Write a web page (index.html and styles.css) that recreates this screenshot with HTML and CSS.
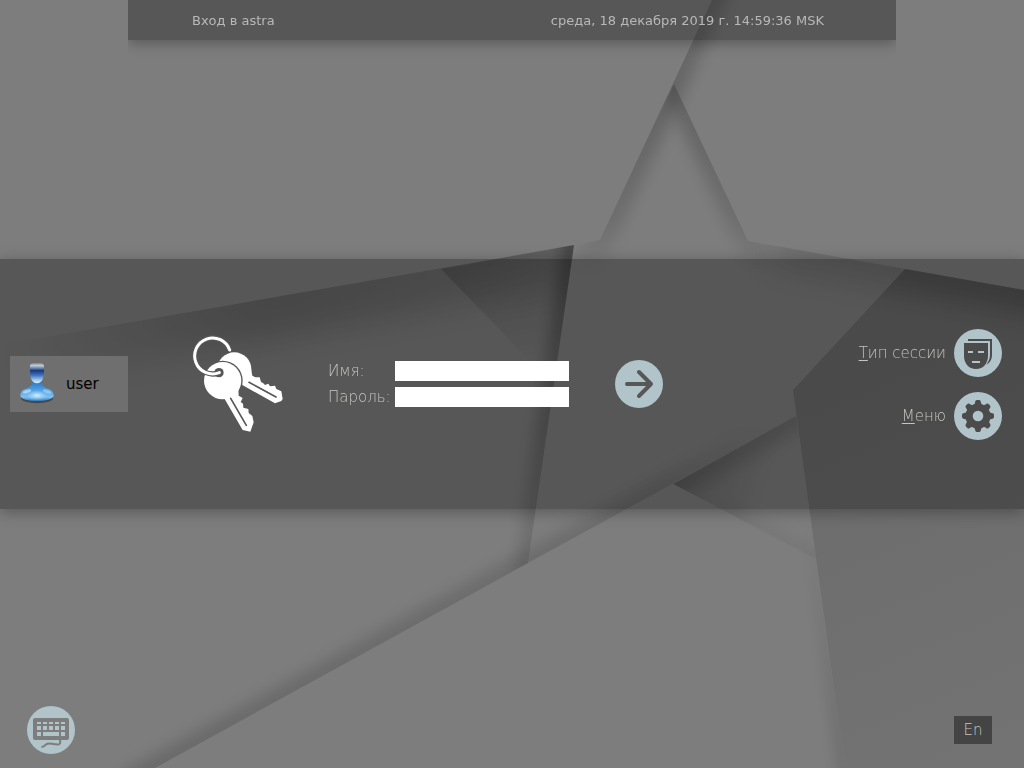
FILE: index.html
```html
<!DOCTYPE html>
<html lang="ru">
<head>
<meta charset="utf-8">
<title>Вход в astra</title>
<meta name="viewport" content="width=device-width, initial-scale=1">
<link rel="stylesheet" href="styles.css">
</head>
<body>
<svg class="wallpaper" viewBox="0 0 1024 768" preserveAspectRatio="xMidYMid slice" aria-hidden="true">
  <defs>
    <filter id="soft" filterUnits="userSpaceOnUse" x="-100" y="-100" width="1224" height="968"><feGaussianBlur stdDeviation="8"/></filter>
    <filter id="wide" filterUnits="userSpaceOnUse" x="-100" y="-100" width="1224" height="968"><feGaussianBlur stdDeviation="16"/></filter>
    <clipPath id="ray"><path d="M712 0 600 240 574 245 560 340H780L748 241 674 84 692 122 760 0Z"/></clipPath>
    <clipPath id="spire"><path d="M674 84 600 240V330H800V251L748 241Z"/></clipPath>
    <clipPath id="east"><path d="M748 241 1024 290V500H700V241Z"/></clipPath>
    <clipPath id="west"><path d="M0 345 574 245 528 563 0 853Z"/></clipPath>
    <clipPath id="above"><path d="M155 768 528 563 796 416 780 300H0V768Z"/></clipPath>
    <clipPath id="wedge"><path d="M673 484 796 416 818 560Z"/></clipPath>
    <clipPath id="south"><path d="M793 390 845 768H700V550Z"/></clipPath>
    <clipPath id="slabtop"><path d="M905 269 1024 290V768H845L793 390Z"/></clipPath>
    <linearGradient id="slab" gradientUnits="userSpaceOnUse" x1="850" y1="380" x2="1010" y2="760">
      <stop offset="0" stop-color="#6b6b6b"/><stop offset="1" stop-color="#737373"/>
    </linearGradient>
    <linearGradient id="facet" gradientUnits="userSpaceOnUse" x1="505" y1="258" x2="525" y2="370">
      <stop offset="0" stop-opacity=".17"/><stop offset="1" stop-opacity="0"/>
    </linearGradient>
    <linearGradient id="fold" gradientUnits="userSpaceOnUse" x1="674" y1="480" x2="760" y2="510">
      <stop offset="0" stop-opacity=".16"/><stop offset="1" stop-opacity="0"/>
    </linearGradient>
    <linearGradient id="slope" gradientUnits="userSpaceOnUse" x1="0" y1="0" x2="600" y2="0">
      <stop offset="0" stop-opacity="0"/><stop offset=".45" stop-opacity=".19"/><stop offset=".75" stop-opacity=".15"/><stop offset="1" stop-opacity=".06"/>
    </linearGradient>
    <linearGradient id="down" gradientUnits="userSpaceOnUse" x1="0" y1="0" x2="0" y2="275">
      <stop offset="0" stop-opacity=".16"/><stop offset=".4" stop-opacity=".2"/><stop offset=".8" stop-opacity=".13"/><stop offset="1" stop-opacity="0"/>
    </linearGradient>
    <linearGradient id="column" gradientUnits="userSpaceOnUse" x1="0" y1="240" x2="0" y2="580">
      <stop offset="0" stop-opacity=".32"/><stop offset=".55" stop-opacity=".22"/><stop offset="1" stop-opacity=".09"/>
    </linearGradient>
    <linearGradient id="ridge" gradientUnits="userSpaceOnUse" x1="155" y1="0" x2="770" y2="0">
      <stop offset="0" stop-opacity=".16"/><stop offset=".8" stop-opacity=".13"/><stop offset="1" stop-opacity="0"/>
    </linearGradient>
    <linearGradient id="lee" gradientUnits="userSpaceOnUse" x1="0" y1="510" x2="0" y2="768">
      <stop offset="0" stop-opacity="0"/><stop offset="1" stop-opacity=".2"/>
    </linearGradient>
  </defs>
  <rect width="1024" height="768" fill="#7d7d7d"/>
  <g clip-path="url(#ray)"><path d="M740-60 600 240 575 293" fill="none" stroke="url(#down)" stroke-width="26" filter="url(#soft)"/></g>
  <g clip-path="url(#spire)"><path d="M664 63 748 241 763 273" fill="none" stroke="url(#down)" stroke-width="24" filter="url(#soft)"/></g>
  <g clip-path="url(#east)"><path d="M770 245 1060 296" fill="none" stroke="#000" stroke-opacity=".15" stroke-width="40" filter="url(#wide)"/></g>
  <g clip-path="url(#west)">
    <path d="M0 345 600 240" fill="none" stroke="url(#slope)" stroke-width="80" filter="url(#wide)"/>
    <path d="M441 269 574 245 558 390Z" fill="url(#facet)"/>
    <path d="M577 225 524 590" fill="none" stroke="url(#column)" stroke-width="22" filter="url(#soft)"/>
  </g>
  <g clip-path="url(#above)"><path d="M120 787 528 563 770 431" fill="none" stroke="url(#ridge)" stroke-width="24" filter="url(#soft)"/></g>
  <g clip-path="url(#wedge)">
    <path d="M673 484 796 416 818 560Z" fill="url(#fold)"/>
    <path d="M660 491 810 408" fill="none" stroke="#000" stroke-opacity=".13" stroke-width="30" filter="url(#soft)"/>
    <path d="M720 509 830 567" fill="none" stroke="#000" stroke-opacity=".05" stroke-width="20" filter="url(#soft)"/>
  </g>
  <g clip-path="url(#south)"><path d="M809 510 850 804" fill="none" stroke="url(#lee)" stroke-width="10" filter="url(#soft)"/></g>
  <path d="M905 269 1024 290V768H845L793 390Z" fill="url(#slab)"/>
  <g clip-path="url(#slabtop)"><path d="M850 259 1080 300" fill="none" stroke="#000" stroke-opacity=".26" stroke-width="40" filter="url(#wide)"/></g>
</svg>

<div class="screen">
  <div class="top">
    <header class="titlebar">
      <span>Вход в astra</span>
      <time datetime="2019-12-18T14:59:36">среда, 18 декабря 2019 г. 14:59:36 MSK</time>
    </header>
  </div>

  <main class="band">
    <button class="account" type="button">
      <svg width="34" height="42" viewBox="0 0 102 126" aria-hidden="true">
        <defs>
          <linearGradient id="head" x1="0" y1="0" x2="0" y2="1">
            <stop offset="0" stop-color="#6d7f91"/><stop offset=".14" stop-color="#c3ccd4"/><stop offset=".3" stop-color="#57719a"/><stop offset=".38" stop-color="#173a80"/><stop offset=".6" stop-color="#3d6fb9"/><stop offset=".85" stop-color="#a9cdf2"/><stop offset="1" stop-color="#d8edfc"/>
          </linearGradient>
          <linearGradient id="torso" x1="0" y1="0" x2="0" y2="1">
            <stop offset="0" stop-color="#2b76c4"/><stop offset=".4" stop-color="#4f9ee0"/><stop offset=".8" stop-color="#7fc0f0"/><stop offset="1" stop-color="#2f78c0"/>
          </linearGradient>
          <radialGradient id="glow"><stop offset="0" stop-color="#d8f0ff"/><stop offset="1" stop-color="#8fd0fa" stop-opacity="0"/></radialGradient>
        </defs>
        <ellipse cx="51" cy="106" rx="48" ry="15" fill="#333" opacity=".65"/>
        <path d="M38 56C36 72 24 74 13 78 4 82 1 89 1 99c4 10 22 15 50 15s46-5 50-15c0-10-4-17-13-21C76 74 68 72 64 56Z" fill="url(#torso)"/>
        <ellipse cx="51" cy="97" rx="34" ry="16" fill="url(#glow)"/>
        <ellipse cx="21" cy="85" rx="13" ry="5" fill="#d5ecfa" opacity=".6" transform="rotate(-18 21 85)"/>
        <ellipse cx="81" cy="85" rx="13" ry="5" fill="#d5ecfa" opacity=".45" transform="rotate(18 81 85)"/>
        <path d="M30 10C30 1 38-1 51-1s21 2 21 11c1 22 0 50-21 51C30 60 29 32 30 10Z" fill="url(#head)"/>
      </svg>
      <span>user</span>
    </button>

    <svg class="keys" viewBox="36 30 276 294" aria-hidden="true">
      <circle cx="163" cy="133" r="51" fill="#fff"/>
      <path d="M183 178 285 235 304 228 308 222 304 199 289 192 285 182 270 184 265 176 255 180 249 174 243 171 239 157 226 157 217 152 212 125 185 140Z" fill="#fff"/>
      <path d="M207 172 288 216" stroke="#575757" stroke-width="5" stroke-linecap="round"/>
      <circle cx="128" cy="167" r="60" fill="#575757"/>
      <circle cx="128" cy="167" r="56" fill="#fff"/>
      <path d="M130 215 188 315 211 320 221 292 217 273 206 264 205 252 190 248 189 236 182 231 188 219 176 212 175 190Z" fill="#fff"/>
      <path d="M152 220 199 301" stroke="#575757" stroke-width="5" stroke-linecap="round"/>
      <circle cx="117" cy="143" r="14" fill="#575757"/>
      <path d="M149 75A54 54 0 1 0 118 143" fill="none" stroke="#575757" stroke-width="16"/>
      <path d="M149 75A54 54 0 1 0 118 143" fill="none" stroke="#fff" stroke-width="9" stroke-linecap="round"/>
    </svg>

    <form class="login" action="#">
      <div class="fields">
        <label for="name">Имя:</label>
        <input id="name" type="text" autocomplete="username">
        <label for="password">Пароль:</label>
        <input id="password" type="password" autocomplete="current-password">
      </div>
      <button class="round" type="submit" aria-label="Войти">
        <svg viewBox="0 0 48 48" aria-hidden="true"><circle cx="24" cy="24" r="24" fill="#b0c4ca"/><path d="M12 24H36M24 12 36 24 24 36" fill="none" stroke="#575757" stroke-width="4" stroke-linecap="round" stroke-linejoin="round"/></svg>
      </button>
    </form>

    <nav class="menu">
      <button class="entry" type="button">
        <span><u>Т</u>ип сессии</span>
        <svg viewBox="0 0 144 144" aria-hidden="true"><circle cx="72" cy="72" r="72" fill="#b0c4ca"/>
          <path d="M42 30H114V76C114 90 110 100 97 107 104 98 108 90 108 76V36H42Z" fill="#4b4b4b"/>
          <path d="M30 42H102V80C102 103 88 120 66 120S30 103 30 80Z" fill="#4b4b4b"/>
          <path d="M42 69H57M72 69H90M54 99H78" stroke="#b0c4ca" stroke-width="6"/>
        </svg>
      </button>
      <button class="entry" type="button">
        <span><u>М</u>еню</span>
        <svg viewBox="-72 -72 144 144" aria-hidden="true"><circle r="72" fill="#b0c4ca"/>
          <g fill="#4b4b4b"><circle r="37"/>
            <path id="tooth" d="M-15-33Q-8-36-8-44Q-7-48-3-48H3Q7-48 8-44Q8-36 15-33Z"/>
            <use href="#tooth" transform="rotate(45)"/><use href="#tooth" transform="rotate(90)"/><use href="#tooth" transform="rotate(135)"/><use href="#tooth" transform="rotate(180)"/><use href="#tooth" transform="rotate(225)"/><use href="#tooth" transform="rotate(270)"/><use href="#tooth" transform="rotate(315)"/>
          </g>
          <circle r="16" fill="#b0c4ca"/>
        </svg>
      </button>
    </nav>
  </main>

  <footer class="bottom">
    <button class="round" type="button" aria-label="Экранная клавиатура">
      <svg viewBox="0 0 144 144" aria-hidden="true"><circle cx="72" cy="72" r="72" fill="#b0c4ca"/>
        <rect x="18" y="36" width="108" height="66" rx="6" fill="#7d7d7d"/>
        <path d="M30 51H114" stroke="#b0c4ca" stroke-width="6" stroke-dasharray="12 6"/>
        <path d="M30 66H42M48 66H60M66 66H78M84 66H96M102 66H114M30 84H42M48 84H96M102 84H114" stroke="#b0c4ca" stroke-width="12"/>
        <path d="M98 100C103 112 98 117 86 115S64 109 56 116 48 122 43 123" fill="none" stroke="#7d7d7d" stroke-width="6"/>
      </svg>
    </button>
    <button class="layout" type="button">En</button>
  </footer>
</div>
</body>
</html>
```
FILE: styles.css
```css
* {
  box-sizing: border-box;
}

body {
  margin: 0;
  background: #7d7d7d;
  color: #c4c4c0;
  font-family: "DejaVu Sans", sans-serif;
  font-size: 15px;
}

button {
  padding: 0;
  border: 0;
  background: none;
  color: inherit;
  font: inherit;
  cursor: pointer;
}

svg {
  display: block;
}

.wallpaper {
  position: fixed;
  inset: 0;
  width: 100%;
  height: 100%;
}

.screen {
  position: relative;
  display: grid;
  grid-template-rows: 1fr auto 1fr;
  min-height: 100vh;
}

.titlebar {
  display: flex;
  align-items: center;
  justify-content: space-between;
  width: 75%;
  height: 40px;
  margin: 0 auto;
  padding: 0 72px 0 64px;
  background: rgba(0, 0, 0, 0.3);
  box-shadow: 0 3px 14px rgba(0, 0, 0, 0.3);
  clip-path: inset(0 0 -20px 0);
  color: #b8b8b8;
  font-size: 13px;
}

.band {
  display: flex;
  align-items: center;
  padding: 60px 22px 60px 10px;
  min-height: 250px;
  background: rgba(0, 0, 0, 0.3);
  box-shadow: 0 3px 14px rgba(0, 0, 0, 0.3);
}

.account {
  display: flex;
  align-items: center;
  gap: 12px;
  width: 118px;
  height: 56px;
  padding-left: 10px;
  background: #6f6f6f;
  color: #000;
}

.keys {
  width: 92px;
  height: 98px;
  margin-left: 64px;
}

.login {
  display: flex;
  align-items: center;
  gap: 46px;
  margin-left: 44px;
}

.fields {
  display: grid;
  grid-template-columns: auto 174px;
  align-items: center;
  gap: 6px 4px;
  font-weight: 200;
}

.fields label {
  line-height: 20px;
}

.fields input {
  width: 100%;
  height: 20px;
  padding: 0 4px;
  border: 0;
  background: #fff;
  color: #000;
  font: inherit;
}

.round svg,
.entry svg {
  width: 48px;
  height: 48px;
}

.menu {
  display: flex;
  flex-direction: column;
  align-items: flex-end;
  gap: 15px;
  margin-left: auto;
  font-weight: 200;
}

.entry {
  display: flex;
  align-items: center;
  gap: 8px;
}

.entry u {
  text-underline-offset: 2px;
}

.bottom {
  display: flex;
  align-items: center;
  align-self: end;
  justify-content: space-between;
  padding: 0 32px 14px 27px;
}

.layout {
  width: 38px;
  height: 28px;
  background: #444;
  font-weight: 200;
}
```
